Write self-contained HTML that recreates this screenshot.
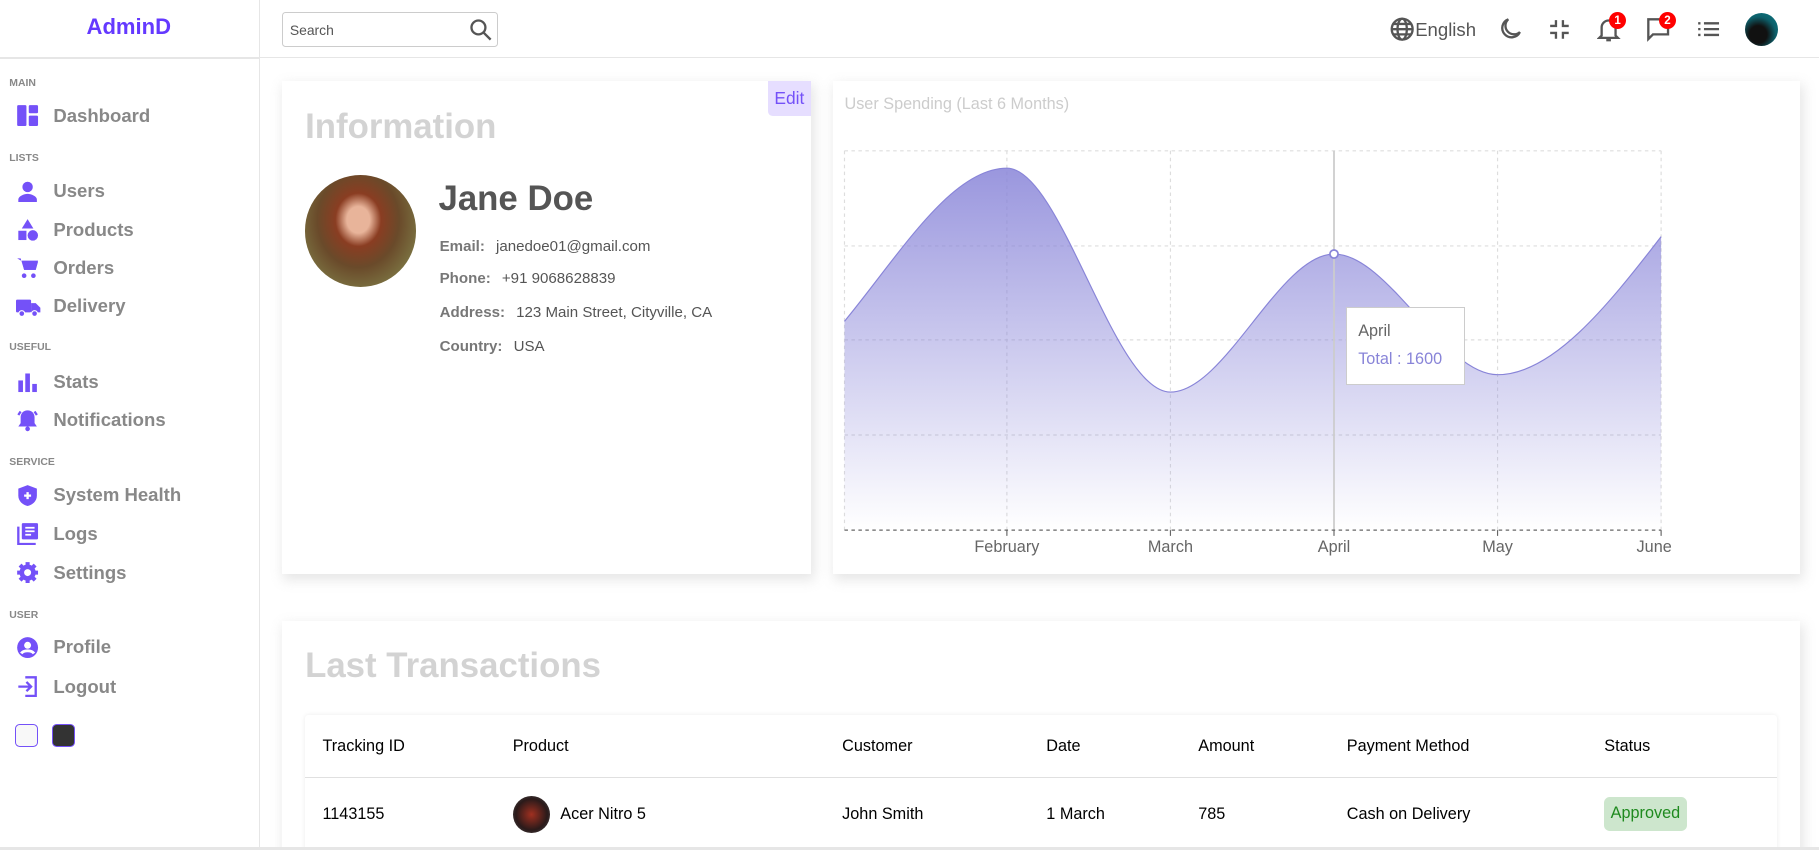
<!DOCTYPE html>
<html><head><meta charset="utf-8"><style>
html,body{margin:0;padding:0;width:1819px;height:850px;overflow:hidden;background:#fff;font-family:"Liberation Sans",sans-serif}
#w{zoom:1.16;width:1568px;height:733px;position:relative;overflow:hidden}
.a{position:absolute}
.side{left:0;top:0;width:223px;height:733px;border-right:1px solid #e6e6e6}
.logo{left:0;top:12px;width:222px;text-align:center;color:#6439ff;font-weight:bold;font-size:19px}
.sec{left:8px;font-size:9px;color:#888;font-weight:bold}
.it{left:14px;font-size:16px;color:#888;font-weight:bold;display:flex;align-items:center}
.it i{display:inline-block;width:20px;height:20px;margin-right:12px;position:relative}
.top{left:224px;top:0;width:1344px;height:49px;border-bottom:1px solid #e6e6e6}
.card{background:#fff;box-shadow:2px 4px 10px 1px rgba(201,201,201,.47)}
.ico{stroke:#555;fill:none;stroke-width:2}
.badge{position:absolute;width:15px;height:15px;border-radius:50%;background:red;color:#fff;font-size:10px;font-weight:bold;text-align:center;line-height:15px}
.det{left:379px;font-size:13px;color:#555}
.det b{color:#777;margin-right:6px}
th,td{text-align:left;font-size:14px;color:#222;font-weight:normal}
</style></head><body><div id="w">
<div class="a side">
<div class="a logo">AdminD</div>
<div class="a" style="left:0;top:49px;width:223px;border-top:2px solid #e6e6e6"></div>
<div class="a sec" style="top:67px">MAIN</div>
<div class="a it" style="top:90px"><i><svg width="20" height="20"><rect x="1" y="1" width="8" height="18" rx="1" fill="#7451f8"/><rect x="11" y="1" width="8" height="7" rx="1" fill="#7451f8"/><rect x="11" y="10" width="8" height="9" rx="1" fill="#7451f8"/></svg></i>Dashboard</div>
<div class="a sec" style="top:132px">LISTS</div>
<div class="a it" style="top:155px"><i><svg width="20" height="20"><circle cx="10" cy="6" r="4.5" fill="#7451f8"/><path d="M2 19v-2c0-3 5-5 8-5s8 2 8 5v2z" fill="#7451f8"/></svg></i>Users</div>
<div class="a it" style="top:188px"><i><svg width="20" height="20"><path d="M10 1l5 8H5z" fill="#7451f8"/><rect x="2" y="11" width="7" height="8" fill="#7451f8"/><circle cx="14.5" cy="15" r="4.5" fill="#7451f8"/></svg></i>Products</div>
<div class="a it" style="top:221px"><i><svg width="20" height="20"><path d="M1 2h3l3 10h10l2-7H6" fill="#7451f8"/><path d="M5 4h14l-2 8H7z" fill="#7451f8"/><circle cx="7" cy="17" r="2" fill="#7451f8"/><circle cx="15" cy="17" r="2" fill="#7451f8"/></svg></i>Orders</div>
<div class="a it" style="top:254px"><i><svg width="22" height="20"><rect x="0" y="4" width="13" height="11" rx="1" fill="#7451f8"/><path d="M13 7h4l4 4v4h-8z" fill="#7451f8"/><circle cx="5" cy="16" r="2.5" fill="#7451f8" stroke="#fff"/><circle cx="16" cy="16" r="2.5" fill="#7451f8" stroke="#fff"/></svg></i>Delivery</div>
<div class="a sec" style="top:295px">USEFUL</div>
<div class="a it" style="top:319px"><i><svg width="20" height="20"><rect x="2" y="9" width="4" height="10" fill="#7451f8"/><rect x="8" y="3" width="4" height="16" fill="#7451f8"/><rect x="14" y="12" width="4" height="7" fill="#7451f8"/></svg></i>Stats</div>
<div class="a it" style="top:352px"><i><svg width="20" height="20"><path d="M10 2c-4 0-6 3-6 6v5l-2 3h16l-2-3V8c0-3-2-6-6-6z" fill="#7451f8"/><circle cx="10" cy="18" r="2" fill="#7451f8"/><path d="M2 6l2-3M18 6l-2-3" stroke="#7451f8" stroke-width="2"/></svg></i>Notifications</div>
<div class="a sec" style="top:394px">SERVICE</div>
<div class="a it" style="top:417px"><i><svg width="20" height="20"><path d="M10 1l8 3v6c0 5-4 8-8 9-4-1-8-4-8-9V4z" fill="#7451f8"/><path d="M10 7v6M7 10h6" stroke="#fff" stroke-width="2"/></svg></i>System Health</div>
<div class="a it" style="top:450px"><i><svg width="20" height="20"><rect x="5" y="1" width="14" height="14" rx="1" fill="#7451f8"/><path d="M2 4v15h15" stroke="#7451f8" stroke-width="2" fill="none"/><path d="M8 5h8M8 8h8M8 11h5" stroke="#fff" stroke-width="1.5"/></svg></i>Logs</div>
<div class="a it" style="top:484px"><i><svg width="20" height="20"><circle cx="10" cy="10" r="7" fill="#7451f8"/><path d="M10 1v4M10 15v4M1 10h4M15 10h4M3.5 3.5l3 3M13.5 13.5l3 3M3.5 16.5l3-3M13.5 6.5l3-3" stroke="#7451f8" stroke-width="3.5"/><circle cx="10" cy="10" r="3" fill="#fff"/></svg></i>Settings</div>
<div class="a sec" style="top:526px">USER</div>
<div class="a it" style="top:548px"><i><svg width="20" height="20"><circle cx="10" cy="10" r="9" fill="#7451f8"/><circle cx="10" cy="8" r="3" fill="#fff"/><path d="M4.5 15c2-3 9-3 11 0" stroke="#fff" stroke-width="2.5" fill="none"/></svg></i>Profile</div>
<div class="a it" style="top:582px"><i><svg width="20" height="20"><path d="M8 2h9v16H8" stroke="#7451f8" stroke-width="2" fill="none"/><path d="M2 10h10M9 6l4 4-4 4" stroke="#7451f8" stroke-width="2" fill="none"/></svg></i>Logout</div>
<div class="a" style="left:13px;top:624px;width:18px;height:18px;border:1px solid #7451f8;border-radius:4px;background:#f8f8f8"></div>
<div class="a" style="left:45px;top:624px;width:18px;height:18px;border:1px solid #7451f8;border-radius:4px;background:#333"></div>
</div>
<div class="a top">
<div class="a" style="left:19px;top:10px;width:185px;height:29px;border:1px solid #ccc;border-radius:3px"><span class="a" style="left:6px;top:8px;font-size:12px;color:#555">Search</span><svg class="a" style="left:160px;top:4px" width="22" height="22"><circle cx="9" cy="9" r="6" class="ico"/><path d="M13.5 13.5l6 6" class="ico" stroke-width="2.5"/></svg></div>
</div>
<svg class="a" style="left:1198px;top:15px" width="21" height="21"><circle cx="10.5" cy="10.5" r="9" class="ico"/><ellipse cx="10.5" cy="10.5" rx="4" ry="9" class="ico" stroke-width="1.5"/><path d="M1.5 10.5h18M3 6h15M3 15h15" class="ico" stroke-width="1.5"/></svg>
<div class="a" style="left:1220px;top:16px;font-size:16px;color:#555">English</div>
<svg class="a" style="left:1292px;top:15px" width="20" height="20"><path d="M8 2a8 8 0 1 0 10 11A7 7 0 0 1 8 2z" class="ico"/></svg>
<svg class="a" style="left:1335px;top:16px" width="18" height="18"><path d="M6 1v5H1M12 1v5h5M6 17v-5H1M12 17v-5h5" class="ico" stroke-width="2.2"/></svg>
<svg class="a" style="left:1377px;top:15px" width="20" height="22"><path d="M4 16V9a6 6 0 0 1 12 0v7l2 2H2z" class="ico"/><path d="M8 20h4" class="ico"/></svg>
<div class="badge" style="left:1387px;top:10px">1</div>
<svg class="a" style="left:1419px;top:15px" width="22" height="22"><path d="M2 2h17v13H6l-4 4z" class="ico"/></svg>
<div class="badge" style="left:1430px;top:10px">2</div>
<svg class="a" style="left:1463px;top:18px" width="20" height="14"><path d="M1 2h2M6 2h13M1 7h2M6 7h13M1 12h2M6 12h13" class="ico" stroke-width="2.2"/></svg>
<div class="a" style="left:1504px;top:11px;width:29px;height:29px;border-radius:50%;background:radial-gradient(circle at 40% 65%,#111 30%,#0d5f6a 60%,#0c7c86)"></div>

<div class="a card" style="left:243px;top:70px;width:456px;height:425px">
<div class="a" style="left:419px;top:0;width:37px;height:30px;background:#e6deff;color:#7451f8;font-size:15px;text-align:center;line-height:30px;border-radius:0 0 0 4px">Edit</div>
<div class="a" style="left:20px;top:22px;font-size:30px;font-weight:bold;color:#d3d3d3">Information</div>
<div class="a" style="left:20px;top:81px;width:96px;height:96px;border-radius:50%;background:radial-gradient(ellipse at 48% 40%,#e8b49a 0 14%,#8a3d22 28%,#6a4a2a 50%,#7a7040 75%,#5a6a40)"></div>
<div class="a" style="left:135px;top:84px;font-size:30px;font-weight:bold;color:#555">Jane Doe</div>
</div>
<div class="a det" style="top:205px"><b>Email:</b> janedoe01@gmail.com</div>
<div class="a det" style="top:233px"><b>Phone:</b> +91 9068628839</div>
<div class="a det" style="top:262px"><b>Address:</b> 123 Main Street, Cityville, CA</div>
<div class="a det" style="top:291px"><b>Country:</b> USA</div>

<div class="a card" style="left:718px;top:70px;width:834px;height:425px"></div>
<div class="a" style="left:728px;top:82px;font-size:14px;color:#ccc">User Spending (Last 6 Months)</div>
<svg class="a" style="left:0;top:0" width="1568" height="500">
<defs><linearGradient id="g" x1="0" y1="0" x2="0" y2="1"><stop offset="0" stop-color="#8884d8" stop-opacity=".85"/><stop offset="1" stop-color="#8884d8" stop-opacity="0"/></linearGradient></defs>
<g stroke="#ddd" stroke-dasharray="3 3" fill="none"><path d="M728 130H1432M728 212H1432M728 293H1432M728 375H1432M728 130V457M868 130V457M1009 130V457M1291 130V457M1432 130V457"/></g>
<path d="M728 277C775 220 820 145 868 145C915 145 960 338 1009 338C1056 338 1103 219 1150 219C1197 219 1244 323 1291 323C1338 323 1385 265 1432 204V457H728Z" fill="url(#g)"/>
<path d="M728 277C775 220 820 145 868 145C915 145 960 338 1009 338C1056 338 1103 219 1150 219C1197 219 1244 323 1291 323C1338 323 1385 265 1432 204" fill="none" stroke="#8884d8" stroke-width="1"/>
<path d="M1150 130V457" stroke="#ccc" stroke-width="1.5"/>
<path d="M728 457H1432" stroke="#666" stroke-dasharray="3 3"/>
<path d="M868 457v5M1009 457v5M1150 457v5M1291 457v5M1432 457v5" stroke="#666"/>
<circle cx="1150" cy="219" r="3.5" fill="#fff" stroke="#8884d8" stroke-width="1.5"/>
<g font-size="14" fill="#666" text-anchor="middle" font-family="Liberation Sans"><text x="868" y="476">February</text><text x="1009" y="476">March</text><text x="1150" y="476">April</text><text x="1291" y="476">May</text><text x="1426" y="476">June</text></g>
</svg>
<div class="a" style="left:1160px;top:265px;width:103px;height:67px;background:#fff;border:1px solid #ccc;box-sizing:border-box">
<div class="a" style="left:10px;top:12px;font-size:14px;color:#666">April</div>
<div class="a" style="left:10px;top:36px;font-size:14px;color:#8884d8">Total : 1600</div></div>

<div class="a card" style="left:243px;top:535px;width:1309px;height:220px">
<div class="a" style="left:20px;top:22px;font-size:30px;font-weight:bold;color:#d3d3d3">Last Transactions</div>
<div class="a" style="left:20px;top:81px;width:1269px;height:140px;box-shadow:0 0 4px rgba(0,0,0,.08);border-radius:3px">
<div class="a" style="left:0;top:54px;width:1269px;border-top:1px solid #e0e0e0"></div>
<div class="a" style="left:15px;top:19px;font-size:14px">Tracking ID</div>
<div class="a" style="left:179px;top:19px;font-size:14px">Product</div>
<div class="a" style="left:463px;top:19px;font-size:14px">Customer</div>
<div class="a" style="left:639px;top:19px;font-size:14px">Date</div>
<div class="a" style="left:770px;top:19px;font-size:14px">Amount</div>
<div class="a" style="left:898px;top:19px;font-size:14px">Payment Method</div>
<div class="a" style="left:1120px;top:19px;font-size:14px">Status</div>
<div class="a" style="left:15px;top:78px;font-size:14px">1143155</div>
<div class="a" style="left:179px;top:70px;width:32px;height:32px;border-radius:50%;background:radial-gradient(circle,#a03020 0,#2a1a1a 60%,#555)"></div>
<div class="a" style="left:220px;top:78px;font-size:14px">Acer Nitro 5</div>
<div class="a" style="left:463px;top:78px;font-size:14px">John Smith</div>
<div class="a" style="left:639px;top:78px;font-size:14px">1 March</div>
<div class="a" style="left:770px;top:78px;font-size:14px">785</div>
<div class="a" style="left:898px;top:78px;font-size:14px">Cash on Delivery</div>
<div class="a" style="left:1120px;top:71px;width:71px;height:29px;border-radius:5px;background:#cde6cd;color:#1f8a1f;font-size:14px;text-align:center;line-height:29px">Approved</div>
</div></div>
<div class="a" style="left:0;top:730px;width:1568px;height:3px;background:#e6e6e6"></div>
</div></body></html>
